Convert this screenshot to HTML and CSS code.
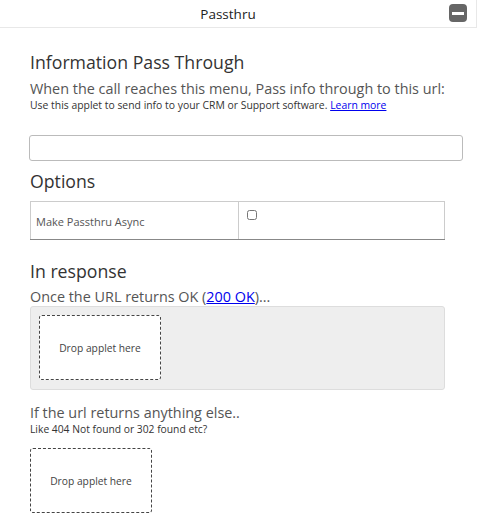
FILE: index.html
```html
<!DOCTYPE html>
<html>
<head>
<meta charset="utf-8">
<link rel="stylesheet" href="styles.css">
</head>
<body>
<div class="panel">
  <div class="header">
    <span class="title">Passthru</span>
    <span class="minus" aria-label="collapse"></span>
  </div>
  <div class="content">
    <h2 class="heading h-first">Information Pass Through</h2>
    <p class="lead">When the call reaches this menu, Pass info through to this url:</p>
    <p class="small">Use this applet to send info to your CRM or Support software. <a href="#">Learn more</a></p>
    <input class="url" type="text">
    <h2 class="heading h-options">Options</h2>
    <table class="opts">
      <tr>
        <td class="opt-label">Make Passthru Async</td>
        <td class="opt-val"><input type="checkbox" class="chk"></td>
      </tr>
    </table>
    <h2 class="heading h-resp">In response</h2>
    <p class="lead2">Once the URL returns OK (<a href="#">200 OK</a>)...</p>
    <div class="dropzone">
      <div class="drop">Drop applet here</div>
    </div>
    <p class="lead2 else">If the url returns anything else..</p>
    <p class="small2">Like 404 Not found or 302 found etc?</p>
    <div class="dropzone plain">
      <div class="drop">Drop applet here</div>
    </div>
  </div>
</div>
</body>
</html>
```
FILE: styles.css
```css
html, body {
  margin: 0;
  padding: 0;
  background: #fff;
}
body {
  font-family: "Open Sans", "Liberation Sans", sans-serif;
  color: #333;
}
.panel {
  width: 478px;
}
.header {
  height: 27px;
  border-bottom: 1px solid #e8e8e8;
  border-right: 1px solid #e8e8e8;
  width: 476px;
  box-sizing: content-box;
  display: flex;
  align-items: center;
  justify-content: center;
  position: relative;
}
.title {
  font-size: 13.5px;
  color: #222;
  margin-right: 20px;
}
.minus {
  position: absolute;
  left: 449px;
  top: 4px;
  width: 18px;
  height: 18px;
  background: #666;
  border-radius: 4px;
}
.minus::after {
  content: "";
  position: absolute;
  left: 3px;
  right: 3px;
  top: 7.5px;
  height: 3px;
  background: #fff;
}
.content {
  padding-left: 30px;
  width: 415px;
}
.heading {
  font-size: 17.7px;
  font-weight: normal;
  color: #333;
  margin: 0;
  line-height: 24px;
}
.h-first { margin-top: 22px; }
.lead {
  font-size: 14.4px;
  color: #555;
  margin: 5px 0 0;
  line-height: 20px;
}
.small {
  font-size: 10.4px;
  color: #333;
  margin: 0;
  line-height: 12px;
}
a { color: #0000ee; }
.url {
  display: block;
  box-sizing: border-box;
  width: 434px;
  height: 26px;
  margin: 24px 0 0 -1px;
  border: 1px solid #bbb;
  border-radius: 3px;
}
.h-options { margin-top: 8px; }
.opts {
  border-collapse: collapse;
  width: 415px;
  margin-top: 8px;
}
.opts td {
  border: 1px solid #ccc;
  height: 38px;
  padding: 0;
  box-sizing: border-box;
}
.opts tr td { border-bottom: 1px solid #888; }
.opt-label {
  width: 208px;
  font-size: 11px;
  color: #555;
  padding-left: 5px !important;
  padding-top: 2px !important;
}
.opt-val {
  vertical-align: top;
}
.chk {
  margin: 8px 0 0 8px;
  width: 10px;
  height: 10px;
}
.h-resp { margin-top: 19px; }
.lead2 {
  font-size: 14.4px;
  color: #555;
  margin: 5px 0 0;
  line-height: 18px;
}
.dropzone {
  box-sizing: border-box;
  height: 84px;
  background: #eee;
  border: 1px solid #ddd;
  border-radius: 3px;
  padding: 8px;
}
.dropzone.plain {
  background: transparent;
  border: none;
  padding: 0;
  margin-top: 13px;
}
.drop {
  box-sizing: border-box;
  width: 122px;
  height: 65px;
  border: 1px dashed #444;
  border-radius: 3px;
  background: #fff;
  display: flex;
  align-items: center;
  justify-content: center;
  font-size: 10.25px;
  color: #444;
}
.else { margin-top: 14px; }
.small2 {
  font-size: 10.3px;
  color: #333;
  margin: 2px 0 0;
  line-height: 11px;
}
```
